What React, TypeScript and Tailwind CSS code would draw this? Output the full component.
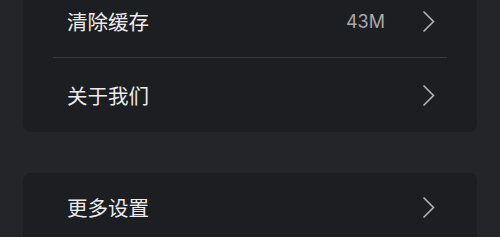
const font = { fontFamily: '"Noto Sans CJK SC", "Noto Sans", sans-serif' };

function Chevron() {
  return (
    <svg width="13" height="23" viewBox="0 0 13 23" fill="none" className="shrink-0">
      <polyline points="1.5,1.5 11.5,11.5 1.5,21.5" stroke="#b4b4b7" strokeWidth="1.6" />
    </svg>
  );
}

function Row({ label, value, divider, lift }: { label: string; value?: string; divider?: boolean; lift?: boolean }) {
  return (
    <div className={`relative flex h-[74px] items-center pl-[44px] pr-[42px] ${lift ? "pb-[6px]" : ""}`}>
      <span className="flex-1 text-[20.5px] text-[#ececee]">{label}</span>
      {value && (
        <span className="mr-[37px] font-['Inter',sans-serif] text-[18px] text-[#a9a9ac]">{value}</span>
      )}
      <Chevron />
      {divider && <div className="absolute bottom-0 left-[30px] right-[30px] h-px bg-[#38393d]" />}
    </div>
  );
}

export default function App() {
  return (
    <div className="h-[237px] w-[500px] overflow-hidden bg-[#242529] px-[23px]" style={font}>
      <div className="-mt-[16px] rounded-b-[8px] bg-[#1d1e21]">
        <Row label="清除缓存" value="43M" divider />
        <Row label="关于我们" />
      </div>
      <div className="mt-[41px] rounded-t-[8px] bg-[#1d1e21]">
        <Row label="更多设置" lift />
      </div>
    </div>
  );
}
